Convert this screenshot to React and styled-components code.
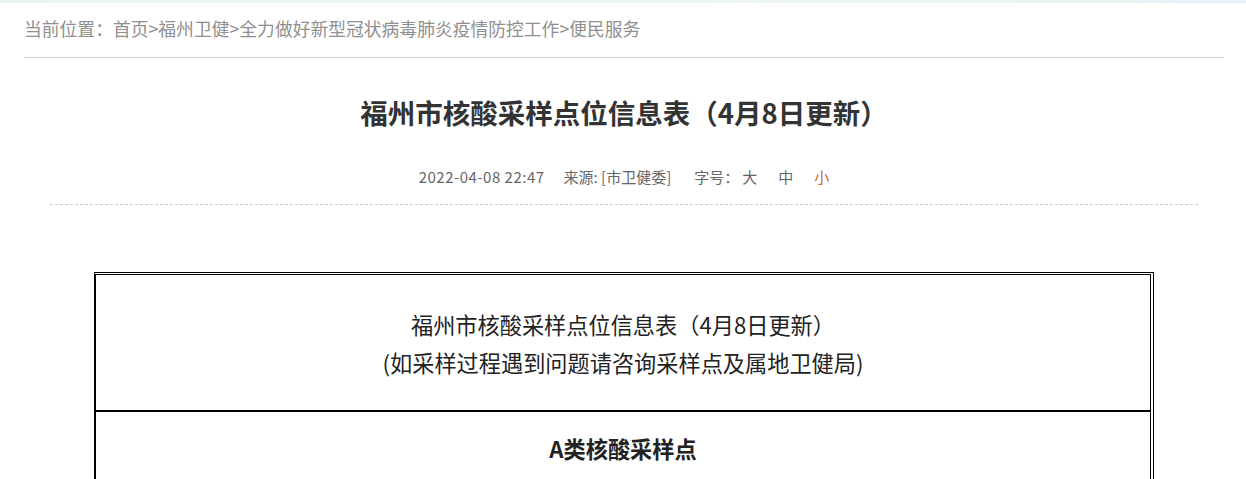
import styled, { createGlobalStyle } from "styled-components";

const GlobalStyle = createGlobalStyle`
  html, body {
    margin: 0;
    padding: 0;
    background: #fff;
    font-family: "Noto Sans CJK SC", "Noto Sans", sans-serif;
  }
`;

const TopStrip = styled.div`
  height: 3px;
  background: linear-gradient(to right, #e9f4f2, #eef6ee 60%, #e6f1f6);
`;

const Page = styled.div`
  width: 1200px;
  margin-left: 24px;
`;

const Breadcrumb = styled.div`
  height: 54px;
  line-height: 50px;
  font-size: 17.8px;
  color: #8f8f8f;
  border-bottom: 1px solid #cfcfcf;
`;

const Title = styled.h1`
  margin: 34px 0 0;
  font-size: 27.5px;
  line-height: 40px;
  font-weight: 700;
  color: #333;
  text-align: center;
`;

const Meta = styled.div`
  margin: 33px 26px 0;
  padding-bottom: 15px;
  border-bottom: 1px dashed #cccccc;
  display: flex;
  justify-content: center;
  align-items: center;
  font-size: 15px;
  line-height: 24px;
  color: #666;
`;

const Date = styled.span`
  letter-spacing: 0.5px;
  margin-right: 19px;
`;

const Source = styled.span`
  margin-right: 23px;
`;

const SizeLabel = styled.span`
  margin-right: 3px;
`;

const SizeOpt = styled.span`
  color: ${(p) => (p.active ? "#c9643c" : "#666")};
  margin-left: ${(p) => (p.first ? "0" : "21px")};
`;

const TableWrap = styled.div`
  width: 1056px;
  margin: 67px auto 0;
  border: 1px solid #000;
  padding: 1px 2px 0 0;
`;

const Cell = styled.div`
  border-left: 1px solid #000;
  border-right: 1px solid #000;
  border-top: 1px solid #000;
  border-bottom: ${(p) => (p.last ? "0" : "1px solid #000")};
  padding: ${(p) => p.pad};
  text-align: center;
  font-size: 22.2px;
  line-height: ${(p) => p.lh};
  color: #222;
  font-weight: ${(p) => (p.bold ? 700 : 400)};
`;

export default function App() {
  return (
    <>
      <GlobalStyle />
      <TopStrip />
      <Page>
        <Breadcrumb>
          当前位置：首页&gt;福州卫健&gt;全力做好新型冠状病毒肺炎疫情防控工作&gt;便民服务
        </Breadcrumb>
        <Title>福州市核酸采样点位信息表（4月8日更新）</Title>
        <Meta>
          <Date>2022-04-08 22:47</Date>
          <Source>来源: [市卫健委]</Source>
          <SizeLabel>字号：</SizeLabel>
          <SizeOpt first>大</SizeOpt>
          <SizeOpt>中</SizeOpt>
          <SizeOpt active>小</SizeOpt>
        </Meta>
        <TableWrap>
          <Cell pad="30px 0 29px" lh="38px">
            福州市核酸采样点位信息表（4月8日更新）
            <br />
            (如采样过程遇到问题请咨询采样点及属地卫健局)
          </Cell>
          <Cell pad="22px 0 30px" lh="28px" bold last>
            A类核酸采样点
          </Cell>
        </TableWrap>
      </Page>
    </>
  );
}
